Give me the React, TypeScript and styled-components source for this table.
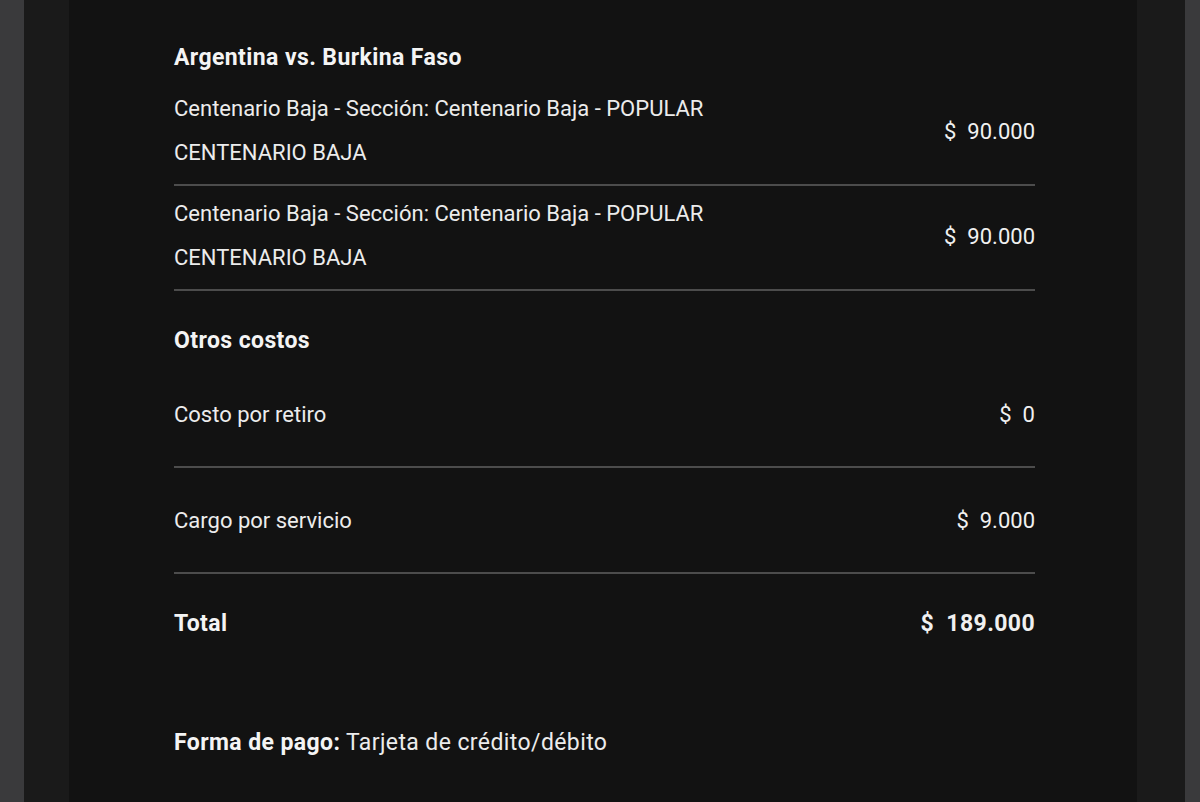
import React from 'react'
import styled, { createGlobalStyle } from 'styled-components'

const GlobalStyle = createGlobalStyle`
  html, body {
    margin: 0;
    padding: 0;
    background: #3a3a3c;
  }
  body {
    font-family: Roboto, 'Liberation Sans', Arial, sans-serif;
    -webkit-font-smoothing: antialiased;
  }
`

const Page = styled.div`
  display: flex;
  height: 802px;
  overflow: hidden;
  background: #3a3a3c;
`

const Strip = styled.div<{ $w: number }>`
  flex: 0 0 ${(p) => p.$w}px;
  background: #3a3a3c;
`

const Band = styled.div<{ $w: number }>`
  flex: 0 0 ${(p) => p.$w}px;
  background: #1a1a1a;
`

const Card = styled.div`
  flex: 1;
  background: #121212;
  padding: 43px 102px 0 105px;
  color: #ececec;
`

const Heading = styled.div<{ $top?: number; $bottom?: number }>`
  font-size: 23px;
  font-weight: 700;
  letter-spacing: 0.4px;
  line-height: 30px;
  color: #f4f4f4;
  margin-top: ${(p) => p.$top || 0}px;
  margin-bottom: ${(p) => p.$bottom || 0}px;
`

const TicketRow = styled.div`
  display: flex;
  align-items: center;
  justify-content: space-between;
  padding: 6px 0 9px;
  border-bottom: 2px solid #4c4c4c;
`

const TicketText = styled.div`
  font-size: 22px;
  line-height: 44px;
`

const Price = styled.div<{ $bold?: boolean }>`
  font-size: ${(p) => (p.$bold ? 23 : 22)}px;
  font-weight: ${(p) => (p.$bold ? 700 : 400)};
  letter-spacing: ${(p) => (p.$bold ? 0.4 : 0)}px;
  white-space: pre;
  color: #f0f0f0;
`

const CostRow = styled.div<{ $h: number; $line?: boolean }>`
  display: flex;
  align-items: center;
  justify-content: space-between;
  height: ${(p) => p.$h}px;
  border-bottom: ${(p) => (p.$line ? '2px solid #4c4c4c' : 'none')};
  font-size: 22px;
`

const TotalLabel = styled.div`
  font-size: 23px;
  font-weight: 700;
  letter-spacing: 0.4px;
  color: #f4f4f4;
`

const Payment = styled.div`
  margin-top: 55px;
  font-size: 23px;
  letter-spacing: 0.4px;
  line-height: 30px;

  b {
    font-weight: 700;
    color: #f4f4f4;
  }
`

const tickets = [
  { section: 'Centenario Baja - Sección: Centenario Baja - POPULAR', sub: 'CENTENARIO BAJA', price: '90.000' },
  { section: 'Centenario Baja - Sección: Centenario Baja - POPULAR', sub: 'CENTENARIO BAJA', price: '90.000' },
]

const costs = [
  { label: 'Costo por retiro', value: '0' },
  { label: 'Cargo por servicio', value: '9.000' },
]

export default function App() {
  return (
    <>
      <GlobalStyle />
      <Page>
        <Strip $w={24} />
        <Band $w={45} />
        <Card>
          <Heading $bottom={8}>Argentina vs. Burkina Faso</Heading>
          {tickets.map((t, i) => (
            <TicketRow key={i}>
              <div>
                <TicketText>{t.section}</TicketText>
                <TicketText>{t.sub}</TicketText>
              </div>
              <Price>{'$  ' + t.price}</Price>
            </TicketRow>
          ))}
          <Heading $top={35} $bottom={6}>Otros costos</Heading>
          {costs.map((c) => (
            <CostRow key={c.label} $h={104} $line>
              <span>{c.label}</span>
              <Price>{'$  ' + c.value}</Price>
            </CostRow>
          ))}
          <CostRow $h={99}>
            <TotalLabel>Total</TotalLabel>
            <Price $bold>{'$  189.000'}</Price>
          </CostRow>
          <Payment>
            <b>Forma de pago:</b> Tarjeta de crédito/débito
          </Payment>
        </Card>
        <Band $w={48} />
        <Strip $w={15} />
      </Page>
    </>
  )
}
